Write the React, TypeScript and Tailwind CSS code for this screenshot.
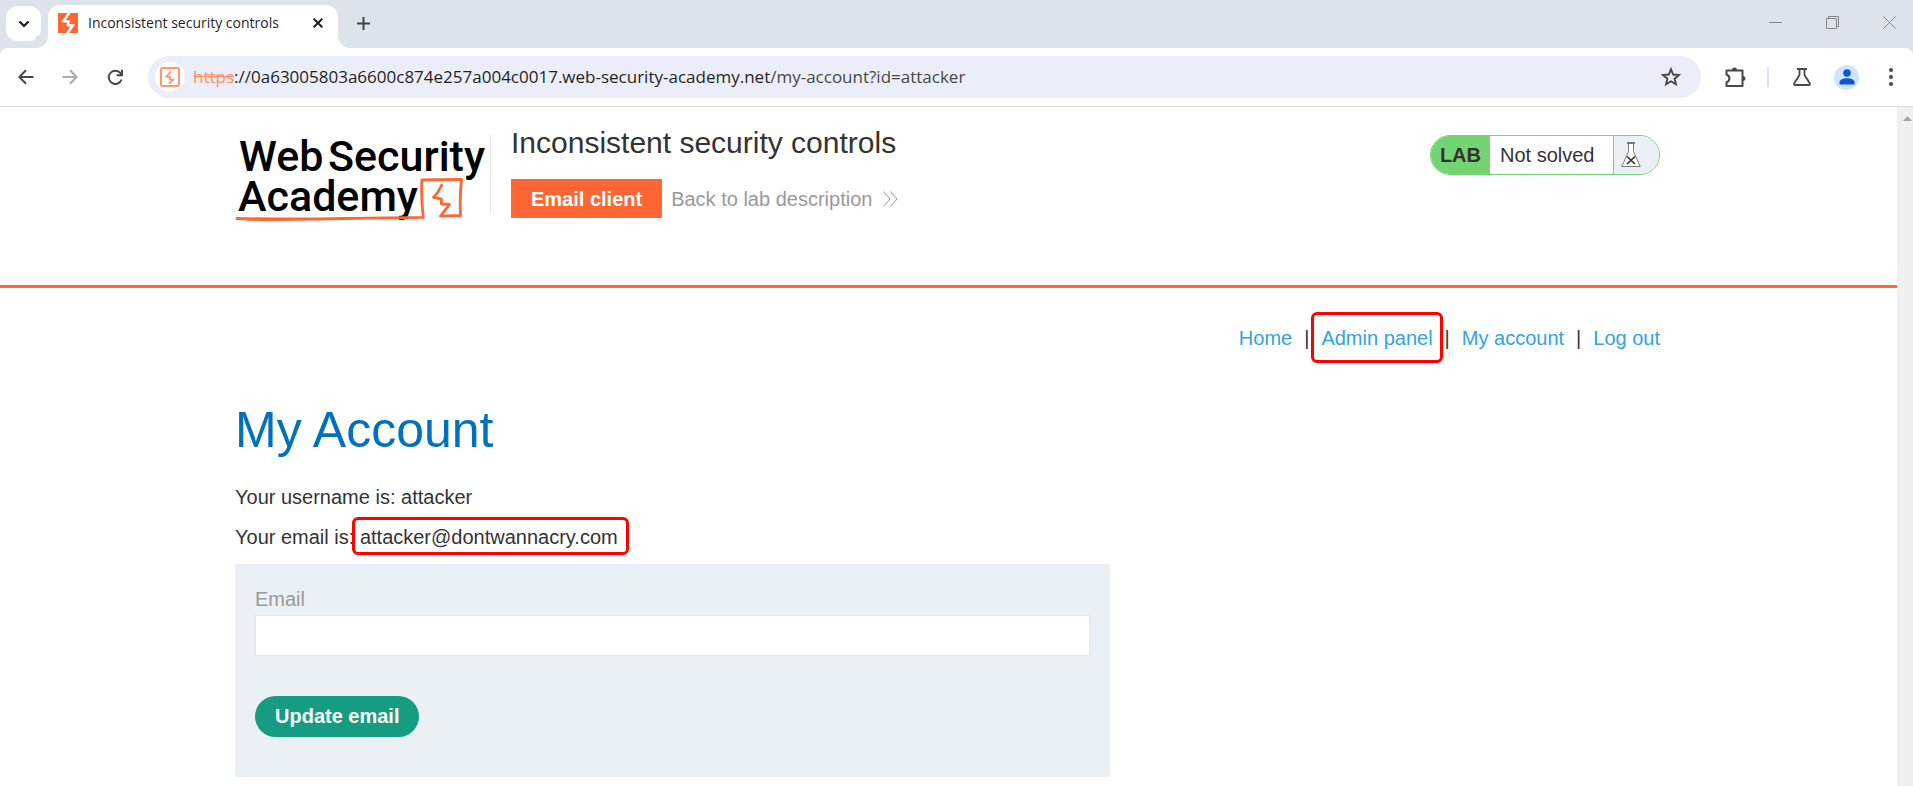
import React from "react";

const icon = {
  fill: "none",
  stroke: "currentColor",
  "aria-hidden": true,
} as const;

function BoltMark() {
  return (
    <svg width="20" height="20" viewBox="0 0 20 20" aria-hidden="true">
      <path d="M0 0h20v20H0z" fill="#ff6633" />
      <path d="M11.500-.5 5.500 8l5 .6-.6 3.600 4.800.3L9.200 20.500" fill="none" stroke="#fff" strokeWidth="2.600" />
    </svg>
  );
}

function TabStrip() {
  return (
    <div className="flex h-12 items-start bg-[#dee2e9]">
      <button aria-label="Search tabs" className="ml-1.5 mt-1.5 grid size-[35px] place-items-center rounded-xl bg-white text-[#1f1f1f]">
        <svg width="12" height="8" viewBox="0 0 12 8" strokeWidth="2.2" {...icon}>
          <path d="M1.5 1.5 6 6l4.500-4.500" />
        </svg>
      </button>
      <div className="relative ml-[7px] mt-[5px] flex h-[43px] w-[290px] items-start rounded-t-xl bg-white pl-2.5 pt-2">
        <span className="absolute -left-3 bottom-0 size-3 bg-white">
          <span className="block size-3 rounded-br-xl bg-[#dee2e9]" />
        </span>
        <span className="absolute -right-3 bottom-0 size-3 bg-white">
          <span className="block size-3 rounded-bl-xl bg-[#dee2e9]" />
        </span>
        <BoltMark />
        <span className="ml-2.5 flex-1 whitespace-nowrap text-[14px] leading-5 text-[#1f1f1f]">
          Inconsistent security controls
        </span>
        <button aria-label="Close tab" className="mr-[15px] mt-[5px] text-[#1f1f1f]">
          <svg width="10" height="10" viewBox="0 0 10 10" strokeWidth="2" {...icon}>
            <path d="M.7.7l8.600 8.600M9.300.7.7 9.300" />
          </svg>
        </button>
      </div>
      <button aria-label="New tab" className="ml-[19px] mt-[17px] text-[#444]">
        <svg width="13" height="13" viewBox="0 0 13 13" strokeWidth="2" {...icon}>
          <path d="M6.500 0v13M0 6.500h13" />
        </svg>
      </button>
      <div className="ml-auto mr-[17px] mt-4 flex gap-11 text-[#868789]">
        <button aria-label="Minimize">
          <svg width="13" height="13" viewBox="0 0 13 13" {...icon}>
            <path d="M0 6.500h13" />
          </svg>
        </button>
        <button aria-label="Restore">
          <svg width="13" height="13" viewBox="0 0 13 13" {...icon}>
            <path d="M.5 2.500h10v10H.5zM2.500 2.500v-2h10v10h-2" />
          </svg>
        </button>
        <button aria-label="Close">
          <svg width="13" height="13" viewBox="0 0 13 13" {...icon}>
            <path d="M.3.3l12.400 12.400M12.700.3.3 12.700" />
          </svg>
        </button>
      </div>
    </div>
  );
}

function Toolbar() {
  return (
    <div className="bg-[#dee2e9]">
      <div className="flex h-[59px] items-center rounded-t-lg border-b border-[#dcdcdc] bg-white text-[#474747]">
        <button aria-label="Back" className="ml-[18px]">
          <svg width="16" height="16" viewBox="0 0 16 16" strokeWidth="2" {...icon}>
            <path d="M15.500 8H1.500M8 1.200 1.300 8 8 14.800" />
          </svg>
        </button>
        <button aria-label="Forward" className="ml-7 text-[#ababab]">
          <svg width="16" height="16" viewBox="0 0 16 16" strokeWidth="2" {...icon}>
            <path d="M.5 8h14M8 1.200 14.700 8 8 14.800" />
          </svg>
        </button>
        <button aria-label="Reload" className="ml-[29px]">
          <svg width="17" height="17" viewBox="0 0 17 17" strokeWidth="2" {...icon}>
            <path d="M14.600 10.500A6.600 6.600 0 1 1 13.200 3.800L15 5.600M15 .8v5.400H9.600" />
          </svg>
        </button>
        <div className="ml-6 flex h-[42px] flex-1 items-center rounded-full bg-[#ebeef8] pl-[7px] pr-5">
          <span className="grid size-[30px] place-items-center rounded-full bg-white">
            <svg width="20" height="20" viewBox="0 0 20 20" aria-hidden="true">
              <rect x="1" y="1" width="18" height="18" rx="1.500" fill="none" stroke="#ff9770" strokeWidth="2" />
              <path d="M11 4.200 6.500 9.600l3.600.6-.4 2.200 3.400.2-4.200 4" fill="none" stroke="#ff9770" strokeWidth="1.900" />
            </svg>
          </span>
          <span className="ml-2 flex-1 whitespace-nowrap text-[17px] leading-6 text-[#1f1f1f]">
            <span className="text-[#ff8f66] line-through">https</span>
            ://0a63005803a6600c874e257a004c0017.web-security-academy.net
            <span className="text-[#474747]">/my-account?id=attacker</span>
          </span>
          <button aria-label="Bookmark this tab">
            <svg width="20" height="20" viewBox="0 0 20 20" strokeWidth="1.900" {...icon}>
              <path d="M10 2.300l2.200 5.200 5.700.5-4.300 3.700 1.300 5.500L10 14.300 5.100 17.200l1.300-5.500L2.100 8l5.700-.5z" />
            </svg>
          </button>
        </div>
        <button aria-label="Extensions" className="ml-6">
          <svg width="21" height="21" viewBox="0 0 21 21" aria-hidden="true">
            <path d="M1.500 3.500H17.500V19H1.500V15.200a3.800 3.800 0 0 0 0-7.400z" fill="none" stroke="currentColor" strokeWidth="2" strokeLinejoin="round" />
            <path d="M7 3a2.500 2.500 0 0 1 5 0zM18 9a2.500 2.500 0 0 1 0 5z" fill="currentColor" />
          </svg>
        </button>
        <span className="ml-[21px] h-5 w-0.5 bg-[#d3e3fd]" />
        <button aria-label="Labs" className="ml-6">
          <svg width="18" height="18" viewBox="0 0 18 18" strokeWidth="1.800" {...icon}>
            <path d="M4 1h10M6.500 1v6L1.300 15.200q-.8 1.800 1 1.800h13.400q1.800 0 1-1.800L11.500 7V1" />
          </svg>
        </button>
        <button aria-label="Profile" className="ml-[23px] grid size-[25px] place-items-center rounded-full bg-[#d3e3fd] text-[#0b57d0]">
          <svg width="16" height="16" viewBox="0 0 16 16" fill="currentColor" aria-hidden="true">
            <circle cx="8" cy="4" r="3.800" />
            <path d="M.5 15.500v-2.300C.5 10.500 4.500 9.300 8 9.300s7.500 1.200 7.500 3.900v2.300z" />
          </svg>
        </button>
        <button aria-label="Menu" className="ml-[30px] mr-5">
          <svg width="4" height="18" viewBox="0 0 4 18" fill="currentColor" aria-hidden="true">
            <circle cx="2" cy="2" r="2" />
            <circle cx="2" cy="9" r="2" />
            <circle cx="2" cy="16" r="2" />
          </svg>
        </button>
      </div>
    </div>
  );
}

function AcademyLogo() {
  return (
    <svg width="255" height="104" viewBox="0 -8 255 104" role="img" aria-label="Web Security Academy" className="shrink-0">
      <g className="font-['Roboto',sans-serif] text-[43px] font-medium" fill="#000">
        <text x="4" y="36">Web</text>
        <text x="93" y="36">Security</text>
        <text x="3" y="76">Academy</text>
      </g>
      <g fill="none" stroke="#ff6633" strokeWidth="2.800" strokeLinejoin="round" strokeLinecap="round">
        <path d="M2 83.500Q60 84.500 110 83.500T188.300 82.300Q186 64 186.900 45L226.500 44.300Q224.500 63 225.500 80.500L205.500 81.200 214.500 69.500 206.500 69 206.300 63.800 198.500 62.300Q203 58 206.700 50" />
        <path d="M12 85Q40 85.500 70 84.500" strokeWidth="1.500" />
      </g>
    </svg>
  );
}

function LabHeader() {
  return (
    <header className="border-b-[3px] border-[#ff6633]">
      <div className="mx-auto flex h-[178px] max-w-[1427px] items-start pr-0.5">
        <a href="#academy" className="mt-5 shrink-0">
          <AcademyLogo />
        </a>
        <div className="mt-7 h-[78px] w-px bg-[#e5e5e5]" />
        <div className="ml-5 mt-[18px]">
          <h2 className="text-[30px] leading-9">Inconsistent security controls</h2>
          <div className="mt-[18px] flex items-center gap-[9px]">
            <button className="h-[39px] bg-[#ff6633] px-5 text-[20px] font-bold leading-6 text-white">Email client</button>
            <a href="#lab" className="flex items-center gap-[11px] text-[20px] leading-6 text-[#999]">
              Back to lab description
              <svg width="15" height="16" viewBox="0 0 15 16" {...icon}>
                <path d="M.5.5 7 8 .5 15.500M7.500.5 14 8l-6.500 7.500" />
              </svg>
            </a>
          </div>
        </div>
        <div className="ml-auto mt-7 flex h-10 items-stretch overflow-hidden rounded-full border border-[#72d472] text-[20px] leading-[38px]">
          <span className="bg-[#72d472] px-[9px] font-bold">LAB</span>
          <span className="w-[123px] pl-2.5">Not solved</span>
          <span className="flex w-[46px] items-center border-l border-[#72d472] bg-[#eaf0f3] pl-[7px]">
            <svg width="20" height="26" viewBox="0 0 20 26" aria-hidden="true">
              <path d="M7.500 1.500v8L.8 24.500h18.400L12.500 9.500v-8" fill="#fff" stroke="#777" />
              <path d="M6 1h8" stroke="#777" strokeWidth="2" />
              <path d="M6 14.500l8 7.500M14 14.500 6 22" stroke="#333" strokeWidth="1.700" />
            </svg>
          </span>
        </div>
      </div>
    </header>
  );
}

function AccountPage() {
  return (
    <main className="mx-auto max-w-[1427px] pr-0.5 pt-[38px] text-[20px] leading-6">
      <nav className="flex justify-end gap-3 text-[#33a3e3]">
        <a href="#home">Home</a>
        <span className="text-[#333]">|</span>
        <a href="#admin" className="relative">
          Admin panel
          <span className="absolute -inset-x-2.5 -top-3.5 h-[51px] rounded-md border-[3px] border-[#ff0000]" />
        </a>
        <span className="text-[#333]">|</span>
        <a href="#account">My account</a>
        <span className="text-[#333]">|</span>
        <a href="#logout">Log out</a>
      </nav>
      <h1 className="mt-[50px] text-[50px] leading-[60px] text-[#0071bc]">My Account</h1>
      <p className="mt-[25px]">Your username is: attacker</p>
      <p className="mt-4">
        Your email is:{" "}
        <span className="relative inline-block">
          attacker@dontwannacry.com
          <span className="absolute -left-2 -right-[11px] -top-2 h-[38px] rounded-md border-[3px] border-[#ff0000]" />
        </span>
      </p>
      <form className="mt-[15px] flex max-w-[875px] flex-col items-start bg-[#eaf0f3] px-5 pb-10 pt-[23px]" onSubmit={(e) => e.preventDefault()}>
        <label htmlFor="email" className="text-[#999]">Email</label>
        <input id="email" type="email" className="mt-1 h-[41px] w-full border border-[#e5e5e5] bg-white px-3 outline-none" />
        <button className="mt-10 h-[41px] rounded-full bg-[#169c80] px-5 pb-0.5 font-bold text-white">Update email</button>
      </form>
    </main>
  );
}

export default function App() {
  return (
    <div className="flex min-h-screen flex-col bg-white">
      <div className="font-['Open_Sans','Noto_Sans',sans-serif]">
        <TabStrip />
        <Toolbar />
      </div>
      <div className="flex flex-1 font-['Liberation_Sans',Arial,sans-serif] text-[#333]">
        <div className="min-w-0 flex-1">
          <LabHeader />
          <AccountPage />
        </div>
        <div className="w-4 shrink-0 bg-[#f0f0f0] pl-1.5 pt-[9px]">
          <svg width="9" height="5" viewBox="0 0 9 5" aria-hidden="true">
            <path d="M4.500 0 9 5H0z" fill="#a3a3a3" />
          </svg>
        </div>
      </div>
    </div>
  );
}
